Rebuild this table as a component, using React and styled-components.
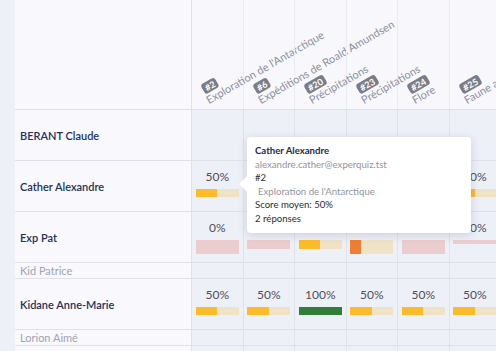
import React from "react";
import styled, { createGlobalStyle } from "styled-components";

const GlobalStyle = createGlobalStyle`
  html, body {
    margin: 0;
    padding: 0;
    background: #eef0f7;
  }
  body {
    font-family: Lato, "Noto Sans", sans-serif;
    overflow: hidden;
  }
`;

const questions = [
  { id: 2, title: "Exploration de l'Antarctique" },
  { id: 6, title: "Expéditions de Roald Amundsen" },
  { id: 20, title: "Précipitations" },
  { id: 23, title: "Précipitations" },
  { id: 24, title: "Flore" },
  { id: 25, title: "Faune antarctique" },
];

const learners = [
  { name: "BERANT Claude", scores: [] },
  {
    name: "Cather Alexandre",
    scores: [{ pct: 50 }, null, null, null, null, { pct: 50 }],
  },
  {
    name: "Exp Pat",
    scores: [
      { pct: 0, h: 14 },
      { pct: 0, h: 9 },
      { pct: 50, h: 9 },
      { pct: 25, h: 14 },
      { pct: 0, h: 14 },
      { pct: 50, h: 4, empty: true },
    ],
  },
  { name: "Kid Patrice", inactive: true, scores: [] },
  {
    name: "Kidane Anne-Marie",
    scores: [{ pct: 50 }, { pct: 50 }, { pct: 100 }, { pct: 50 }, { pct: 50 }, { pct: 50 }],
  },
  { name: "Lorion Aimé", inactive: true, scores: [] },
  { name: "", inactive: true, scores: [] },
];

const fillColor = (pct) => {
  if (pct >= 100) return "#327e39";
  if (pct >= 50) return "#fdbb2a";
  return "#ef7d34";
};

const Page = styled.div`
  position: relative;
  display: flex;
  width: 496px;
  height: 351px;
  overflow: hidden;
`;

const Strip = styled.div`
  width: 15px;
  flex: none;
  background: #eef0f7;
`;

const Table = styled.div`
  display: flex;
  flex-direction: column;
  flex: none;
`;

const Row = styled.div`
  display: flex;
  height: ${(p) => p.$height}px;
  border-bottom: 1px solid #dfe1e9;
  box-sizing: border-box;
  flex: none;
  background: ${(p) => (p.$header ? "#f8f8fc" : "transparent")};
`;

const NameCell = styled.div`
  width: 177px;
  flex: none;
  display: flex;
  align-items: center;
  padding-left: 5px;
  box-sizing: border-box;
  background: #f8f8fd;
  border-right: 1px solid #dfe1e9;
  font-size: 11px;
  font-weight: ${(p) => (p.$inactive ? 400 : 600)};
  color: ${(p) => (p.$inactive ? "#a0a3b2" : "#23305a")};
`;

const HeaderCol = styled.div`
  position: relative;
  width: 51.5px;
  flex: none;
  box-sizing: border-box;
  border-right: 1px solid #ececf3;
`;

const Label = styled.div`
  position: absolute;
  left: 18px;
  bottom: 3px;
  display: flex;
  flex-direction: column;
  align-items: flex-start;
  transform: rotate(-30deg);
  transform-origin: left bottom;
  white-space: nowrap;
  font-size: 11px;
  line-height: 12px;
  color: #8d90a0;
`;

const Badge = styled.span`
  margin-left: 2px;
  padding: 0 3px;
  border-radius: 3px;
  background: #7a7d88;
  color: #fff;
  font-size: 9px;
  font-weight: 700;
  line-height: 11px;
`;

const Cell = styled.div`
  width: 51.5px;
  flex: none;
  box-sizing: border-box;
  border-right: 1px solid #e0e2ea;
  background: #eef0f8;
  display: flex;
  flex-direction: column;
  align-items: center;
  padding-top: 9px;
`;

const Pct = styled.div`
  font-size: 12px;
  line-height: 14px;
  color: #4d4f5c;
`;

const Bar = styled.div`
  margin-top: 5px;
  width: 43px;
  height: ${(p) => p.$h}px;
  display: flex;
  background: ${(p) => (p.$zero ? "#eccdcf" : "#f0e2c7")};
`;

const Fill = styled.div`
  height: 100%;
  background: ${(p) => p.$color};
`;

const Tooltip = styled.div`
  position: absolute;
  left: 247px;
  top: 137px;
  width: 224px;
  box-sizing: border-box;
  padding: 7px 8px 8px;
  background: #fff;
  border-radius: 4px;
  box-shadow: 0 2px 10px rgba(40, 50, 90, 0.18);
  font-size: 9.6px;
  line-height: 13.5px;
  color: #2a2d3a;

  &::before {
    content: "";
    position: absolute;
    left: -8px;
    top: 39px;
    border-top: 8px solid transparent;
    border-bottom: 8px solid transparent;
    border-right: 8px solid #fff;
  }
`;

const TipName = styled.div`
  font-weight: 700;
  color: #1d2750;
`;

const TipMuted = styled.div`
  color: #9194a4;
  padding-left: ${(p) => (p.$indent ? 3 : 0)}px;
`;

const ScoreCell = ({ score }) => (
  <Cell>
    {score && (
      <>
        <Pct>{score.pct}%</Pct>
        <Bar $h={score.h || 8} $zero={score.pct === 0 || score.empty}>
          {score.pct > 0 && !score.empty && (
            <Fill style={{ width: `${score.pct}%` }} $color={fillColor(score.pct)} />
          )}
        </Bar>
      </>
    )}
  </Cell>
);

export default function App() {
  return (
    <>
      <GlobalStyle />
      <Page>
        <Strip />
        <Table>
          <Row $height={110} $header>
            <NameCell />
            {questions.map((q) => (
              <HeaderCol key={q.id}>
                <Label>
                  <Badge>#{q.id}</Badge>
                  <span>{q.title}</span>
                </Label>
              </HeaderCol>
            ))}
          </Row>
          {learners.map((l, i) => (
            <Row key={i} $height={l.inactive ? 16 : 51}>
              <NameCell $inactive={l.inactive}>{l.name}</NameCell>
              {questions.map((q, j) => (
                <ScoreCell key={q.id} score={l.scores[j]} />
              ))}
            </Row>
          ))}
        </Table>
        <Tooltip>
          <TipName>Cather Alexandre</TipName>
          <TipMuted>alexandre.cather@experquiz.tst</TipMuted>
          <div>#2</div>
          <TipMuted $indent>Exploration de l'Antarctique</TipMuted>
          <div>Score moyen: 50%</div>
          <div>2 réponses</div>
        </Tooltip>
      </Page>
    </>
  );
}
